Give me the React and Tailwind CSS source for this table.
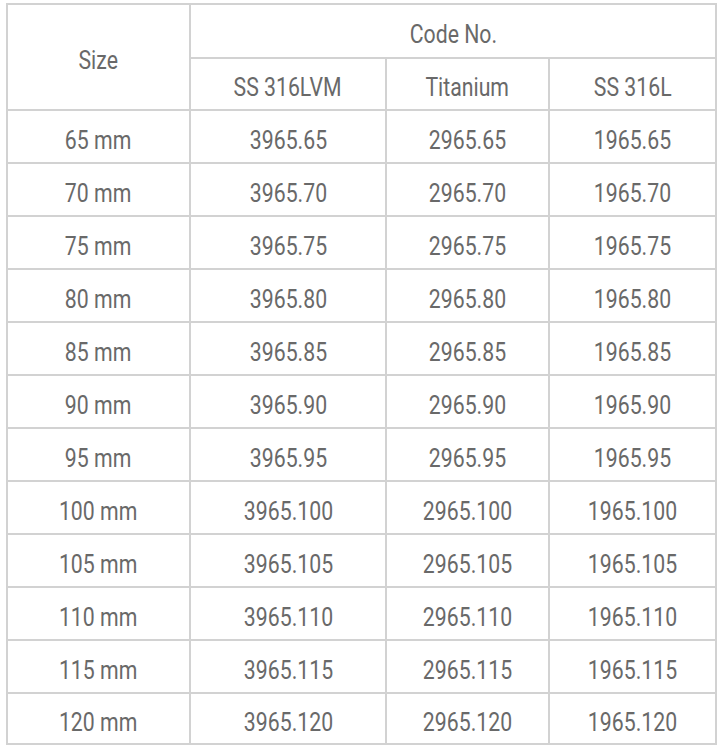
import React from "react";

const sizes = [65, 70, 75, 80, 85, 90, 95, 100, 105, 110, 115, 120];

const font = { fontFamily: "Roboto, sans-serif" };

// Roboto squeezed horizontally to match the condensed face in the design
function Cell({ children }) {
  return <span className="inline-block scale-x-[0.85] whitespace-nowrap">{children}</span>;
}

export default function App() {
  return (
    <div className="bg-white w-[722px] h-[750px] pt-[3px] pl-[6px]" style={font}>
      <table className="border-collapse table-fixed w-[709px] text-[25px] text-[#696969] text-center">
        <colgroup>
          <col className="w-[183px]" />
          <col className="w-[196px]" />
          <col className="w-[163px]" />
          <col className="w-[167px]" />
        </colgroup>
        <thead>
          <tr className="h-[54px]">
            <th rowSpan={2} className="border-2 border-[#d2d2d2] font-normal pt-2">
              <Cell>Size</Cell>
            </th>
            <th colSpan={3} className="border-2 border-[#d2d2d2] font-normal pt-2">
              <Cell>Code No.</Cell>
            </th>
          </tr>
          <tr className="h-[52px]">
            <th className="border-2 border-[#d2d2d2] font-normal pt-2"><Cell>SS 316LVM</Cell></th>
            <th className="border-2 border-[#d2d2d2] font-normal pt-2"><Cell>Titanium</Cell></th>
            <th className="border-2 border-[#d2d2d2] font-normal pt-2"><Cell>SS 316L</Cell></th>
          </tr>
        </thead>
        <tbody>
          {sizes.map((s, i) => (
            <tr key={s} className={i === sizes.length - 1 ? "h-[51px]" : "h-[53px]"}>
              <td className="border-2 border-[#d2d2d2] pt-2"><Cell>{s} mm</Cell></td>
              <td className="border-2 border-[#d2d2d2] pt-2"><Cell>3965.{s}</Cell></td>
              <td className="border-2 border-[#d2d2d2] pt-2"><Cell>2965.{s}</Cell></td>
              <td className="border-2 border-[#d2d2d2] pt-2"><Cell>1965.{s}</Cell></td>
            </tr>
          ))}
        </tbody>
      </table>
    </div>
  );
}
